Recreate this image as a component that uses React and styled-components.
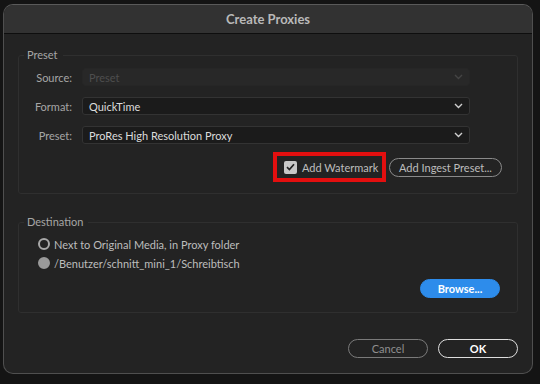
import styled, { createGlobalStyle } from "styled-components";

const Global = createGlobalStyle`
  html, body {
    margin: 0;
    padding: 0;
    background: #141414;
    font-family: Lato, "Open Sans", sans-serif;
    font-size: 11px;
  }
`;

const Screen = styled.div`
  width: 540px;
  height: 384px;
  padding: 4px 0 0 3px;
  box-sizing: border-box;
`;

const Window = styled.div`
  width: 530px;
  height: 370px;
  box-sizing: border-box;
  border: 1px solid #4f4f4f;
  border-top-color: #5a5a5a;
  border-radius: 10px;
  background: #232323;
  overflow: hidden;
  display: flex;
  flex-direction: column;
`;

const TitleBar = styled.div`
  height: 28px;
  flex: none;
  background: #323232;
  border-bottom: 1px solid #0e0e0e;
  display: flex;
  align-items: center;
  justify-content: center;
  color: #b9b9b9;
  font-weight: 700;
  font-size: 13px;
`;

const Body = styled.div`
  padding: 14px 14px 0 14px;
  display: flex;
  flex-direction: column;
`;

const Group = styled.fieldset`
  margin: 0;
  padding: 0;
  border: 1px solid #2f2f2f;
  border-radius: 3px;
  height: ${({ h }) => h}px;
  box-sizing: border-box;
  margin-top: ${({ top }) => top || 0}px;
  position: relative;
`;

const Legend = styled.legend`
  color: #a6a6a6;
  font-size: 11px;
  padding: 0 5px 0 3px;
  margin-left: 5px;
  line-height: 14px;
`;

const Rows = styled.div`
  display: grid;
  grid-template-columns: 53px 388px;
  column-gap: 10px;
  row-gap: 11px;
  padding-top: 6px;
  align-items: center;
`;

const Label = styled.div`
  text-align: right;
  color: ${({ dim }) => (dim ? "#8c8c8c" : "#a6a6a6")};
`;

const Select = styled.div`
  height: 18px;
  box-sizing: border-box;
  border: 1px solid ${({ disabled }) => (disabled ? "#262626" : "#333")};
  border-radius: 3px;
  background: ${({ disabled }) => (disabled ? "#282828" : "#1b1b1b")};
  color: ${({ disabled }) => (disabled ? "#4e4e4e" : "#dcdcdc")};
  display: flex;
  align-items: center;
  justify-content: space-between;
  padding: 0 6px 0 6px;
`;

const ActionRow = styled.div`
  display: flex;
  align-items: center;
  gap: 3px;
  margin: 8px 0 0 254px;
`;

const Highlight = styled.div`
  width: 113px;
  height: 30px;
  box-sizing: border-box;
  border: 4px solid #e30f0f;
  display: flex;
  align-items: center;
  padding-left: 7px;
  gap: 5px;
  color: #bdbdbd;
`;

const Check = styled.div`
  width: 13px;
  height: 13px;
  border-radius: 2px;
  background: #c8c8c8;
  display: flex;
  align-items: center;
  justify-content: center;
`;

const Pill = styled.button`
  font-family: inherit;
  font-size: 11px;
  font-weight: ${({ strong }) => (strong ? 700 : 400)};
  height: 19px;
  width: ${({ w }) => w}px;
  padding: 0;
  border-radius: 10px;
  border: 1px solid ${({ border }) => border};
  background: ${({ bg }) => bg || "transparent"};
  color: ${({ color }) => color};
  display: flex;
  align-items: center;
  justify-content: center;
`;

const Options = styled.div`
  display: flex;
  flex-direction: column;
  gap: 7px;
  padding: 9px 0 0 19px;
`;

const Option = styled.div`
  display: flex;
  align-items: center;
  gap: 4px;
  color: #bdbdbd;
  height: 12px;
`;

const Radio = styled.div`
  width: 12px;
  height: 12px;
  box-sizing: border-box;
  border-radius: 50%;
  border: 2px solid ${({ filled }) => (filled ? "#9a9a9a" : "#a8a8a8")};
  background: ${({ filled }) => (filled ? "#9a9a9a" : "transparent")};
`;

const BrowseRow = styled.div`
  display: flex;
  justify-content: flex-end;
  padding: 10px 17px 0 0;
`;

const Footer = styled.div`
  display: flex;
  justify-content: flex-end;
  gap: 10px;
  padding: 26px 0 0 0;
`;

const Chevron = ({ color }) => (
  <svg width="9" height="6" viewBox="0 0 9 6">
    <path d="M1 1l3.5 3.5L8 1" fill="none" stroke={color} strokeWidth="1.4" />
  </svg>
);

const fields = [
  { label: "Source:", value: "Preset", disabled: true },
  { label: "Format:", value: "QuickTime" },
  { label: "Preset:", value: "ProRes High Resolution Proxy" },
];

export default function App() {
  return (
    <Screen>
      <Global />
      <Window>
        <TitleBar>Create Proxies</TitleBar>
        <Body>
          <Group h={146}>
            <Legend>Preset</Legend>
            <Rows>
              {fields.map((f) => (
                <>
                  <Label key={f.label + "l"}>{f.label}</Label>
                  <Select key={f.label} disabled={f.disabled}>
                    <span>{f.value}</span>
                    <Chevron color={f.disabled ? "#444" : "#cfcfcf"} />
                  </Select>
                </>
              ))}
            </Rows>
            <ActionRow>
              <Highlight>
                <Check>
                  <svg width="9" height="8" viewBox="0 0 9 8">
                    <path d="M1 4.2l2.4 2.3L8 1.2" fill="none" stroke="#222" strokeWidth="1.7" />
                  </svg>
                </Check>
                Add Watermark
              </Highlight>
              <Pill w={113} border="#8a8a8a" color="#bdbdbd">
                Add Ingest Preset...
              </Pill>
            </ActionRow>
          </Group>
          <Group h={98} top={21}>
            <Legend>Destination</Legend>
            <Options>
              <Option>
                <Radio />
                Next to Original Media, in Proxy folder
              </Option>
              <Option>
                <Radio filled />
                /Benutzer/schnitt_mini_1/Schreibtisch
              </Option>
            </Options>
            <BrowseRow>
              <Pill w={80} strong bg="#2d8ceb" border="#2d8ceb" color="#fff">
                Browse...
              </Pill>
            </BrowseRow>
          </Group>
          <Footer>
            <Pill w={80} border="#7a7a7a" color="#8f8f8f">
              Cancel
            </Pill>
            <Pill w={80} strong border="#dedede" color="#fff">
              OK
            </Pill>
          </Footer>
        </Body>
      </Window>
    </Screen>
  );
}
